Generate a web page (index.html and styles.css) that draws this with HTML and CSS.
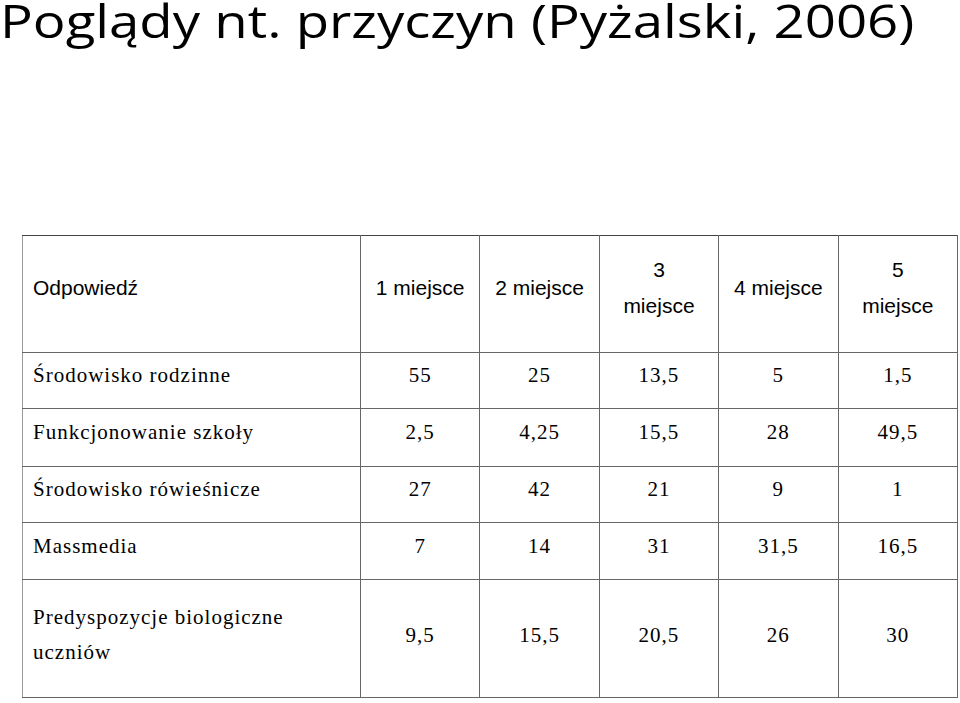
FILE: index.html
```html
<!DOCTYPE html>
<html lang="pl">
<head>
<meta charset="utf-8">
<title>Poglądy nt. przyczyn</title>
<link rel="stylesheet" href="styles.css">
</head>
<body>
<div class="slide">
  <header class="title-box">
    <h1 class="title">Poglądy nt. przyczyn (Pyżalski, 2006)</h1>
  </header>
  <table class="data">
    <colgroup>
      <col class="c-first">
      <col class="c-num"><col class="c-num"><col class="c-num"><col class="c-num"><col class="c-num">
    </colgroup>
    <tr class="head">
      <td class="label">Odpowiedź</td>
      <td>1 miejsce</td>
      <td>2 miejsce</td>
      <td>3<br>miejsce</td>
      <td>4 miejsce</td>
      <td>5<br>miejsce</td>
    </tr>
    <tr class="row">
      <td class="label">Środowisko rodzinne</td>
      <td>55</td><td>25</td><td>13,5</td><td>5</td><td>1,5</td>
    </tr>
    <tr class="row r2">
      <td class="label">Funkcjonowanie szkoły</td>
      <td>2,5</td><td>4,25</td><td>15,5</td><td>28</td><td>49,5</td>
    </tr>
    <tr class="row">
      <td class="label">Środowisko rówieśnicze</td>
      <td>27</td><td>42</td><td>21</td><td>9</td><td>1</td>
    </tr>
    <tr class="row r4">
      <td class="label">Massmedia</td>
      <td>7</td><td>14</td><td>31</td><td>31,5</td><td>16,5</td>
    </tr>
    <tr class="row tall">
      <td class="label">Predyspozycje biologiczne<br>uczniów</td>
      <td>9,5</td><td>15,5</td><td>20,5</td><td>26</td><td>30</td>
    </tr>
  </table>
</div>
</body>
</html>
```

FILE: styles.css
```css
html, body {
  margin: 0;
  padding: 0;
  background: #ffffff;
}

.slide {
  width: 960px;
  height: 703px;
  overflow: hidden;
}

.title-box {
  height: 235px;
}

.title {
  display: inline-block;
  margin: 0;
  padding: 0;
  font-family: "Open Sans", Lato, sans-serif;
  font-weight: 400;
  font-size: 46px;
  line-height: 40px;
  color: #000;
  white-space: nowrap;
  transform: scaleX(1.186);
  transform-origin: 0 50%;
}

.data {
  margin-left: 22px;
  border-collapse: collapse;
  table-layout: fixed;
  width: 935px;
  color: #000;
}

.c-first { width: 338px; }
.c-num { width: 119.4px; }

.data td {
  border: 1px solid #666;
  text-align: center;
  vertical-align: middle;
  padding: 0 4px;
}

.data td.label {
  text-align: left;
  padding-left: 10px;
  border-left-color: #9a9a9a;
}

.head td {
  height: 117px;
  font-family: "Liberation Sans", Arial, sans-serif;
  font-size: 21px;
  line-height: 36px;
  padding-bottom: 13px;
  border-top-color: #444;
  box-sizing: border-box;
}

.row td {
  height: 56px;
  font-family: "Liberation Serif", "Times New Roman", serif;
  font-size: 21px;
  letter-spacing: 1px;
  line-height: 35px;
  padding-bottom: 10px;
  box-sizing: border-box;
}

.row.r2 td { height: 58px; }
.row.r4 td { height: 57px; }
.row.tall td { height: 118px; padding-bottom: 7px; }
```
